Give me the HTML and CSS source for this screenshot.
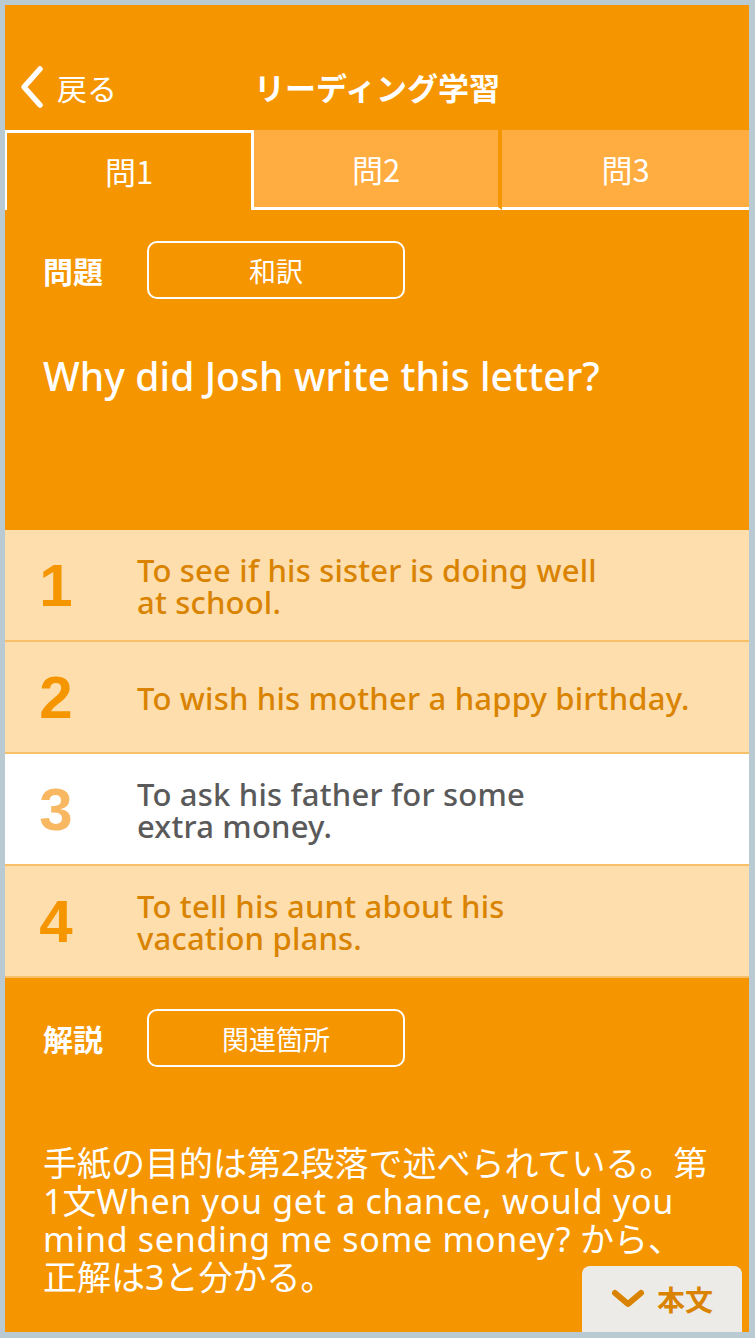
FILE: index.html
```html
<!DOCTYPE html>
<html lang="ja">
	<head>
		<meta charset="utf-8">
		<title>リーディング学習</title>
		<link rel="stylesheet" href="styles.css">
	</head>
	<body>
		<div class="app">
			<!-- ヘッダー -->
			<header class="nav">
				<a class="back" href="#">
					<svg width="26" height="44" viewBox="0 0 26 44"><path d="M21 4 L5 22 L21 40" fill="none" stroke="#fff" stroke-width="5.5" stroke-linecap="round" stroke-linejoin="round"/></svg>
					<span>戻る</span>
				</a>
				<h1 class="title">リーディング学習</h1>
				<span></span>
			</header>
			<!-- タブ -->
			<div class="tabs">
				<div class="tab current">問1</div>
				<div class="tab">問2</div>
				<div class="tab">問3</div>
			</div>
			<!-- 問題 -->
			<section class="block question">
				<div class="label-row">
					<span class="label">問題</span>
					<span class="outline-btn">和訳</span>
				</div>
				<p class="question-text">Why did Josh write this letter?</p>
			</section>
			<!-- 選択肢 -->
			<ul class="choices">
				<li><span class="num">1</span><span class="text">To see if his sister is doing well<br>at school.</span></li>
				<li><span class="num">2</span><span class="text">To wish his mother a happy birthday.</span></li>
				<li class="answer"><span class="num">3</span><span class="text">To ask his father for some<br>extra money.</span></li>
				<li><span class="num">4</span><span class="text">To tell his aunt about his<br>vacation plans.</span></li>
			</ul>
			<!-- 解説 -->
			<section class="block explain">
				<div class="label-row">
					<span class="label">解説</span>
					<span class="outline-btn">関連箇所</span>
				</div>
				<p class="explain-text">手紙の目的は第2段落で述べられている。第<br>1文<span class="en">When you get a chance, would you</span><br><span class="en">mind sending me some money?</span> から、<br>正解は3と分かる。</p>
			</section>
			<a class="body-btn" href="#">
				<svg width="34" height="20" viewBox="0 0 34 20"><path d="M4 4 L17 15 L30 4" fill="none" stroke="#d98300" stroke-width="6" stroke-linecap="round" stroke-linejoin="round"/></svg>
				<span>本文</span>
			</a>
		</div>
	</body>
</html>
```
FILE: styles.css
```css
* {
  margin: 0;
  padding: 0;
  box-sizing: border-box;
}

body {
  background-color: #b9cad3;
  font-family: "Noto Sans", "Noto Sans CJK JP", sans-serif;
  color: #fff;
}

a {
  color: inherit;
  text-decoration: none;
}

ul {
  list-style: none;
}

.app {
  position: relative;
  width: 744px;
  height: 1327px;
  margin: 5px 6px 6px 5px;
  background-color: #f59500;
  overflow: hidden;
}

/* header */
.nav {
  height: 125px;
  padding-top: 38px;
  display: grid;
  grid-template-columns: 1fr auto 1fr;
  align-items: center;
}

.back {
  display: flex;
  align-items: center;
  gap: 12px;
  padding-left: 14px;
  font-family: "Noto Sans CJK JP", sans-serif;
  font-size: 30px;
}

.back svg {
  display: block;
}

.title {
  font-family: "Noto Sans CJK JP", sans-serif;
  font-size: 31px;
  font-weight: bold;
}

/* tabs */
.tabs {
  display: grid;
  grid-template-columns: 249px 248px 247px;
  height: 80px;
}

.tab {
  display: flex;
  align-items: center;
  justify-content: center;
  background-color: #ffac40;
  border-bottom: 3px solid #fff;
  font-family: "Noto Sans CJK JP", sans-serif;
  font-size: 31px;
}

.tab:nth-child(2) {
  border-right: 4px solid #f59500;
}

.tab.current {
  background-color: #f59500;
  border: 3px solid #fff;
  border-left-width: 2px;
  border-bottom: 0;
  padding-bottom: 3px;
}

/* question / explain blocks */
.block {
  padding: 31px 0 0 38px;
}

.question {
  height: 320px;
}

.explain {
  height: 354px;
}

.label-row {
  display: flex;
  align-items: center;
  height: 58px;
}

.label {
  width: 104px;
  font-family: "Noto Sans CJK JP", sans-serif;
  font-size: 30px;
  font-weight: bold;
}

.outline-btn {
  display: flex;
  align-items: center;
  justify-content: center;
  width: 258px;
  height: 58px;
  border: 2.5px solid #fff;
  border-radius: 10px;
  font-family: "Noto Sans CJK JP", sans-serif;
  font-size: 27px;
}

.question-text {
  margin-top: 53px;
  font-size: 39px;
  font-weight: 500;
  letter-spacing: 0.1px;
  line-height: 48px;
}

.explain-text {
  margin-top: 77px;
  font-size: 34px;
  line-height: 38px;
  white-space: nowrap;
}

.explain-text .en {
  letter-spacing: 0.7px;
}

/* choices */
.choices li {
  display: flex;
  align-items: center;
  height: 112px;
  background-color: #fedead;
  border-bottom: 2px solid #f8c068;
  color: #d98300;
}

.choices .num {
  width: 102px;
  text-align: center;
  font-family: "Liberation Sans", sans-serif;
  font-size: 60px;
  font-weight: bold;
  color: #f59500;
}

.choices .text {
  margin-left: 30px;
  padding-top: 2px;
  font-size: 31px;
  font-weight: 500;
  letter-spacing: 0.2px;
  line-height: 32px;
}

.choices li.answer {
  background-color: #fff;
  color: #5a5a5a;
}

.choices li.answer .num {
  color: #f8b862;
}

/* bottom button */
.body-btn {
  position: absolute;
  right: 7px;
  bottom: 0;
  width: 160px;
  height: 66px;
  display: flex;
  align-items: center;
  justify-content: center;
  gap: 12px;
  background-color: #edebe7;
  border-radius: 8px 8px 0 0;
  color: #d98300;
  font-family: "Noto Sans CJK JP", sans-serif;
  font-size: 28px;
  font-weight: bold;
}
```
